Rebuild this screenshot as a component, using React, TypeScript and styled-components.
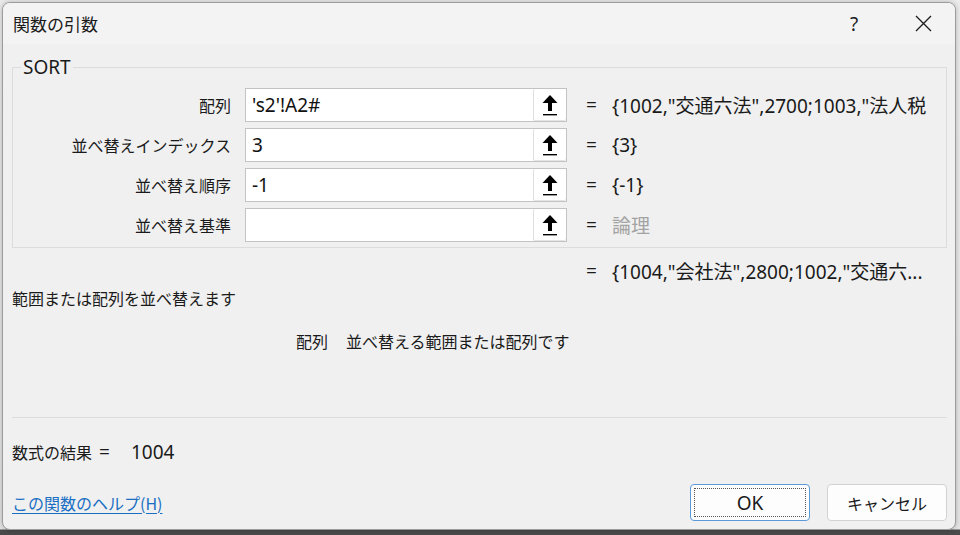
import styled, { createGlobalStyle } from 'styled-components'

const GlobalStyle = createGlobalStyle`
  html, body {
    margin: 0;
    padding: 0;
  }
  body {
    font-family: 'Noto Sans', 'Noto Sans CJK JP', sans-serif;
    color: #1a1a1a;
  }
`

type Arg = {
  label: string
  input: string
  value: string
  dim?: boolean
}

// values as the dialog shows them (the first one runs past the edge)
const args: Arg[] = [
  { label: '配列', input: "'s2'!A2#", value: '{1002,"交通六法",2700;1003,"法人税' },
  { label: '並べ替えインデックス', input: '3', value: '{3}' },
  { label: '並べ替え順序', input: '-1', value: '{-1}' },
  { label: '並べ替え基準', input: '', value: '論理', dim: true },
]

// shared columns for the argument rows and the result line
const COLUMNS = '218px 322px 10px 1fr'
const COL_GAP = '14px'

export default function App() {
  return (
    <Screen>
      <GlobalStyle />
      <Dialog>
        <TitleBar>
          <Title>関数の引数</Title>
          <TitleButtons>
            <TitleButton>?</TitleButton>
            <TitleButton>
              <svg width='17' height='17' viewBox='0 0 17 17'>
                <path d='M1 1 L16 16 M16 1 L1 16' stroke='#1a1a1a' strokeWidth='1.3' fill='none' />
              </svg>
            </TitleButton>
          </TitleButtons>
        </TitleBar>

        <Body>
          <GroupBox>
            <Legend>SORT</Legend>
            <ArgGrid>
              {args.map((a) => (
                <ArgRow key={a.label}>
                  <ArgLabel>{a.label}</ArgLabel>
                  <Field>
                    <FieldText>{a.input}</FieldText>
                    <RefButton>
                      <svg width='18' height='24' viewBox='0 0 18 24'>
                        <path d='M9 2 L16.5 10 L11 10 L11 18 L7 18 L7 10 L1.5 10 Z' fill='#000' />
                        <rect x='2' y='21' width='14' height='1.4' fill='#000' />
                      </svg>
                    </RefButton>
                  </Field>
                  <Eq>=</Eq>
                  <Value dim={a.dim}>{a.value}</Value>
                </ArgRow>
              ))}
            </ArgGrid>
          </GroupBox>

          <ResultLine>
            <span />
            <span />
            <Eq>=</Eq>
            <Value>{'{1004,"会社法",2800;1002,"交通六...'}</Value>
          </ResultLine>

          <Description>範囲または配列を並べ替えます</Description>

          <ArgHelp>
            <span>配列</span>
            <span>並べ替える範囲または配列です</span>
          </ArgHelp>

          <Spacer />
          <Separator />

          <FormulaResult>
            数式の結果<ResultEq>=</ResultEq>
            <ResultNumber>1004</ResultNumber>
          </FormulaResult>

          <Footer>
            <HelpLink href='#'>この関数のヘルプ(H)</HelpLink>
            <ButtonRow>
              <Button primary>
                <FocusRing>OK</FocusRing>
              </Button>
              <Button>キャンセル</Button>
            </ButtonRow>
          </Footer>
        </Body>
      </Dialog>
    </Screen>
  )
}

const Screen = styled.div`
  width: 960px;
  height: 535px;
  box-sizing: border-box;
  padding: 2px 4px 4px 2px;
  background: linear-gradient(#ebebeb 0, #e4e4e4 529px, #4a4a4a 530px, #4a4a4a 100%);
  overflow: hidden;
`

const Dialog = styled.div`
  height: 528px;
  box-sizing: border-box;
  display: flex;
  flex-direction: column;
  background: #f0f0f0;
  border: 1px solid #9c9c9c;
  border-radius: 8px;
  box-shadow: 0 0 5px rgba(0, 0, 0, 0.25);
  overflow: hidden;
`

const TitleBar = styled.div`
  height: 41px;
  flex: none;
  display: flex;
  align-items: center;
  justify-content: space-between;
  padding-left: 10px;
  background: #f3f3f3;
`

const Title = styled.div`
  font-family: 'Noto Sans CJK JP', sans-serif;
  font-size: 17px;
  color: #1a1a1a;
`

const TitleButtons = styled.div`
  display: flex;
  gap: 23px;
  padding-right: 9px;
`

const TitleButton = styled.div`
  width: 46px;
  height: 41px;
  display: flex;
  align-items: center;
  justify-content: center;
  font-family: 'Noto Sans', sans-serif;
  font-size: 19px;
  color: #1a1a1a;
`

const Body = styled.div`
  flex: 1;
  display: flex;
  flex-direction: column;
  padding: 0 8px 8px 9px;
`

const GroupBox = styled.fieldset`
  margin: 13px 0 0 0;
  padding: 11px 11px 5px 0;
  min-width: 0;
  border: 1px solid #dcdcdc;
`

const Legend = styled.legend`
  margin-left: 8px;
  padding: 0 2px;
  font-family: 'Noto Sans', sans-serif;
  font-size: 19px;
  line-height: 20px;
  color: #1a1a1a;
`

const ArgGrid = styled.div`
  display: flex;
  flex-direction: column;
  gap: 6px;
`

const ArgRow = styled.div`
  display: grid;
  grid-template-columns: ${COLUMNS};
  column-gap: ${COL_GAP};
  align-items: center;
  height: 34px;

  & > :nth-child(3) {
    margin-left: 5px;
  }
  & > :nth-child(4) {
    margin-left: 7px;
  }
`

const ArgLabel = styled.div`
  text-align: right;
  font-family: 'Noto Sans CJK JP', sans-serif;
  font-size: 16px;
  white-space: nowrap;
  color: #1a1a1a;
`

const Field = styled.div`
  height: 34px;
  box-sizing: border-box;
  display: flex;
  background: #fff;
  border: 1px solid #c3c3c3;
`

const FieldText = styled.div`
  flex: 1;
  padding-left: 6px;
  display: flex;
  align-items: center;
  font-family: 'Noto Sans', sans-serif;
  font-size: 19px;
  color: #111;
`

const RefButton = styled.div`
  width: 32px;
  flex: none;
  display: flex;
  align-items: center;
  justify-content: center;
  border-left: 1px solid #dedede;
  border-radius: 2px;
  box-shadow: inset 0 -1px 0 #e4e4e4;
`

const Eq = styled.div`
  font-family: 'Noto Sans', sans-serif;
  font-size: 19px;
  color: #1a1a1a;
  text-align: center;
`

const Value = styled.div<{ dim?: boolean }>`
  font-family: 'Noto Sans', 'Noto Sans CJK JP', sans-serif;
  font-size: 19px;
  white-space: nowrap;
  color: ${(p) => (p.dim ? '#a3a3a3' : '#1a1a1a')};
`

const ResultLine = styled.div`
  display: grid;
  grid-template-columns: ${COLUMNS};
  column-gap: ${COL_GAP};
  align-items: center;
  margin-top: 9px;
  padding: 0 12px 0 1px;
  height: 24px;

  & > :nth-child(3) {
    margin-left: 5px;
  }
  & > :nth-child(4) {
    margin-left: 7px;
  }
`

const Description = styled.div`
  margin-top: 5px;
  font-family: 'Noto Sans CJK JP', sans-serif;
  font-size: 16px;
  line-height: 24px;
  color: #1a1a1a;
`

const ArgHelp = styled.div`
  margin-top: 19px;
  padding-left: 284px;
  display: flex;
  gap: 18px;
  font-family: 'Noto Sans CJK JP', sans-serif;
  font-size: 16px;
  line-height: 24px;
  color: #1a1a1a;
`

const Spacer = styled.div`
  flex: 1;
`

const Separator = styled.div`
  height: 1px;
  background: #dddddd;
`

const FormulaResult = styled.div`
  margin-top: 22px;
  display: flex;
  align-items: center;
  font-family: 'Noto Sans CJK JP', sans-serif;
  font-size: 16px;
  line-height: 24px;
  color: #1a1a1a;
`

const ResultEq = styled.span`
  margin-left: 7px;
  font-family: 'Noto Sans', sans-serif;
  font-size: 19px;
`

const ResultNumber = styled.span`
  margin-left: 21px;
  font-family: 'Noto Sans', sans-serif;
  font-size: 19px;
`

const Footer = styled.div`
  margin-top: 20px;
  display: flex;
  align-items: center;
  justify-content: space-between;
`

const HelpLink = styled.a`
  font-family: 'Noto Sans CJK JP', sans-serif;
  font-size: 16px;
  color: #1a6fc4;
  text-decoration: underline;
  text-underline-offset: 3px;
`

const ButtonRow = styled.div`
  display: flex;
  gap: 17px;
`

const Button = styled.div<{ primary?: boolean }>`
  width: 120px;
  height: 37px;
  box-sizing: border-box;
  display: flex;
  align-items: center;
  justify-content: center;
  padding: 3px;
  background: #fdfdfd;
  border: 1px solid ${(p) => (p.primary ? '#5b9ad8' : '#d2d2d2')};
  border-radius: 4px;
  font-family: 'Noto Sans CJK JP', sans-serif;
  font-size: 16px;
  color: #1a1a1a;
`

const FocusRing = styled.div`
  width: 100%;
  height: 100%;
  box-sizing: border-box;
  display: flex;
  align-items: center;
  justify-content: center;
  border: 1px dotted #555;
  font-family: 'Noto Sans', sans-serif;
  font-size: 19px;
`
